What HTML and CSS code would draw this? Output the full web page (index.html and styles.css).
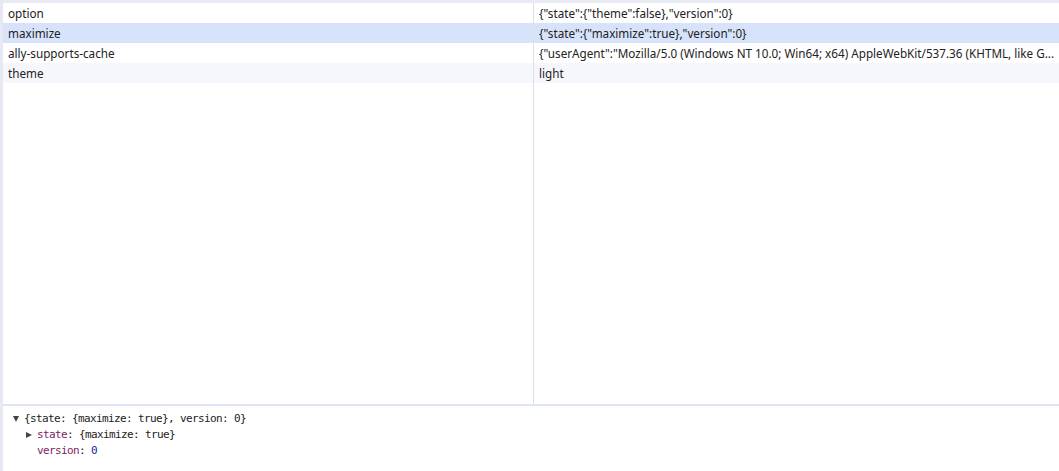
FILE: index.html
```html
<!DOCTYPE html>
<html>
<head>
<meta charset="utf-8">
<link rel="stylesheet" href="styles.css">
</head>
<body>
<div class="panel">
  <div class="table">
    <div class="col col-key">
      <div class="cell">option</div>
      <div class="cell selected">maximize</div>
      <div class="cell">ally-supports-cache</div>
      <div class="cell stripe">theme</div>
      <div class="filler"></div>
    </div>
    <div class="col col-val">
      <div class="cell">{"state":{"theme":false},"version":0}</div>
      <div class="cell selected">{"state":{"maximize":true},"version":0}</div>
      <div class="cell">{"userAgent":"Mozilla/5.0 (Windows NT 10.0; Win64; x64) AppleWebKit/537.36 (KHTML, like G...</div>
      <div class="cell stripe">light</div>
      <div class="filler"></div>
    </div>
  </div>
  <div class="preview">
    <div class="line l0"><span class="tri down"></span><span>{state: {maximize: true}, version: 0}</span></div>
    <div class="line l1"><span class="tri right"></span><span class="key">state</span>: {maximize: true}</div>
    <div class="line l1 nokids"><span class="key">version</span>: <span class="num">0</span></div>
  </div>
</div>
</body>
</html>
```
FILE: styles.css
```css
html, body {
  margin: 0;
  padding: 0;
  background: #ffffff;
}
body {
  width: 1059px;
  height: 471px;
  overflow: hidden;
}
.panel {
  display: flex;
  flex-direction: column;
  height: 471px;
  border-left: 3px solid #e6e9f2;
  border-top: 3px solid #e8ebf4;
  box-sizing: border-box;
}
.table {
  display: flex;
  height: 401px;
  border-bottom: 2px solid #dde5f6;
  box-sizing: content-box;
}
.col {
  display: flex;
  flex-direction: column;
  min-width: 0;
}
.col-key {
  width: 530px;
  border-right: 1px solid #dadfe8;
}
.col-val {
  flex: 1;
}
.cell {
  height: 20px;
  line-height: 20px;
  padding-left: 5px;
  font-family: "Noto Sans", "Open Sans", sans-serif;
  font-size: 11.7px;
  color: #222222;
  white-space: nowrap;
  overflow: hidden;
}
.selected {
  background: #d7e3fb;
}
.stripe {
  background: #f5f7fd;
}
.filler {
  flex: 1;
}
.preview {
  padding-top: 5px;
  font-family: "DejaVu Sans Mono", monospace;
  font-size: 11px;
  letter-spacing: -0.62px;
  color: #222222;
}
.line {
  height: 16px;
  line-height: 16px;
  display: flex;
  align-items: center;
  white-space: pre;
}
.l0 { padding-left: 10px; }
.l1 { padding-left: 23px; }
.nokids { padding-left: 34px; }
.tri {
  width: 0;
  height: 0;
  margin-right: 5px;
}
.tri.down {
  border-left: 3.5px solid transparent;
  border-right: 3.5px solid transparent;
  border-top: 6px solid #444444;
}
.tri.right {
  border-top: 3.5px solid transparent;
  border-bottom: 3.5px solid transparent;
  border-left: 6px solid #444444;
}
.key { color: #7d1d67; }
.num { color: #1a1aa6; }
```
